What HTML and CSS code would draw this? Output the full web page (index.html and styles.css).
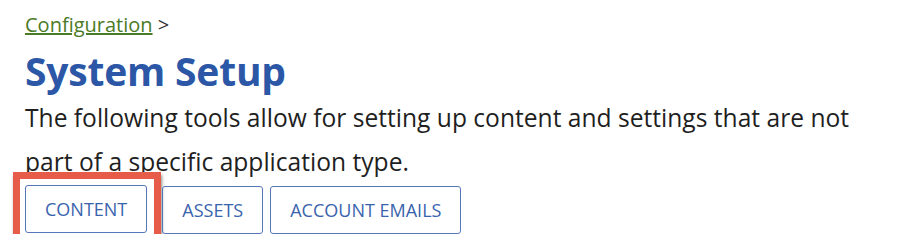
FILE: index.html
```html
<!DOCTYPE html>
<html lang="en">
<head>
    <meta charset="UTF-8">
    <meta name="viewport" content="width=device-width, initial-scale=1.0">
    <title>System Setup</title>
    <link rel="stylesheet" href="styles.css">
</head>
<body>
    <div class="page">
        <p class="breadcrumb"><a href="#">Configuration</a> &gt;</p>
        <h1 class="title">System Setup</h1>
        <p class="intro">The following tools allow for setting up content and settings that are not part of a specific application type.</p>

        <div class="tools">
            <div class="highlight">
                <a class="tool" href="#">Content</a>
            </div>
            <a class="tool" href="#">Assets</a>
            <a class="tool" href="#">Account Emails</a>
        </div>
    </div>
</body>
</html>
```

FILE: styles.css
```css
/* Page basics */
body, html {
    margin: 0;
    padding: 0;
    background-color: #fff;
    font-family: "Open Sans", Arial, sans-serif;
    color: #222;
}

.page {
    padding: 11px 25px 0 25px;
}

/* Breadcrumb link */
.breadcrumb {
    margin: 0;
    font-size: 20px;
    line-height: 28px;
    color: #333;
}

.breadcrumb a {
    color: #4b7a27;
    text-decoration: underline;
}

/* Main heading */
.title {
    margin: 8px 0 1px 0;
    font-family: "Open Sans", sans-serif;
    font-size: 39px;
    font-weight: 700;
    line-height: 48px;
    letter-spacing: -0.2px;
    color: #2b57a6;
}

.intro {
    margin: 0;
    font-size: 24.6px;
    line-height: 44px;
    color: #1f1f1f;
}

/* Tool buttons */
.tools {
    display: flex;
    align-items: center;
    gap: 7px;
    margin-top: 1px;
}

.tool {
    display: block;
    box-sizing: border-box;
    height: 48px;
    line-height: 46px;
    padding: 0 19px;
    border: 1px solid #5577b8;
    border-radius: 3px;
    font-size: 18px;
    text-transform: uppercase;
    text-decoration: none;
    color: #3a63ad;
}

.highlight {
    display: flex;
    margin: -13px -6px -7px -12px;
    padding: 6px 7px 1px 5px;
    border: 7px solid #e65c48;
    box-shadow: 1px 3px 3px rgba(0, 0, 0, 0.45);
}
```
